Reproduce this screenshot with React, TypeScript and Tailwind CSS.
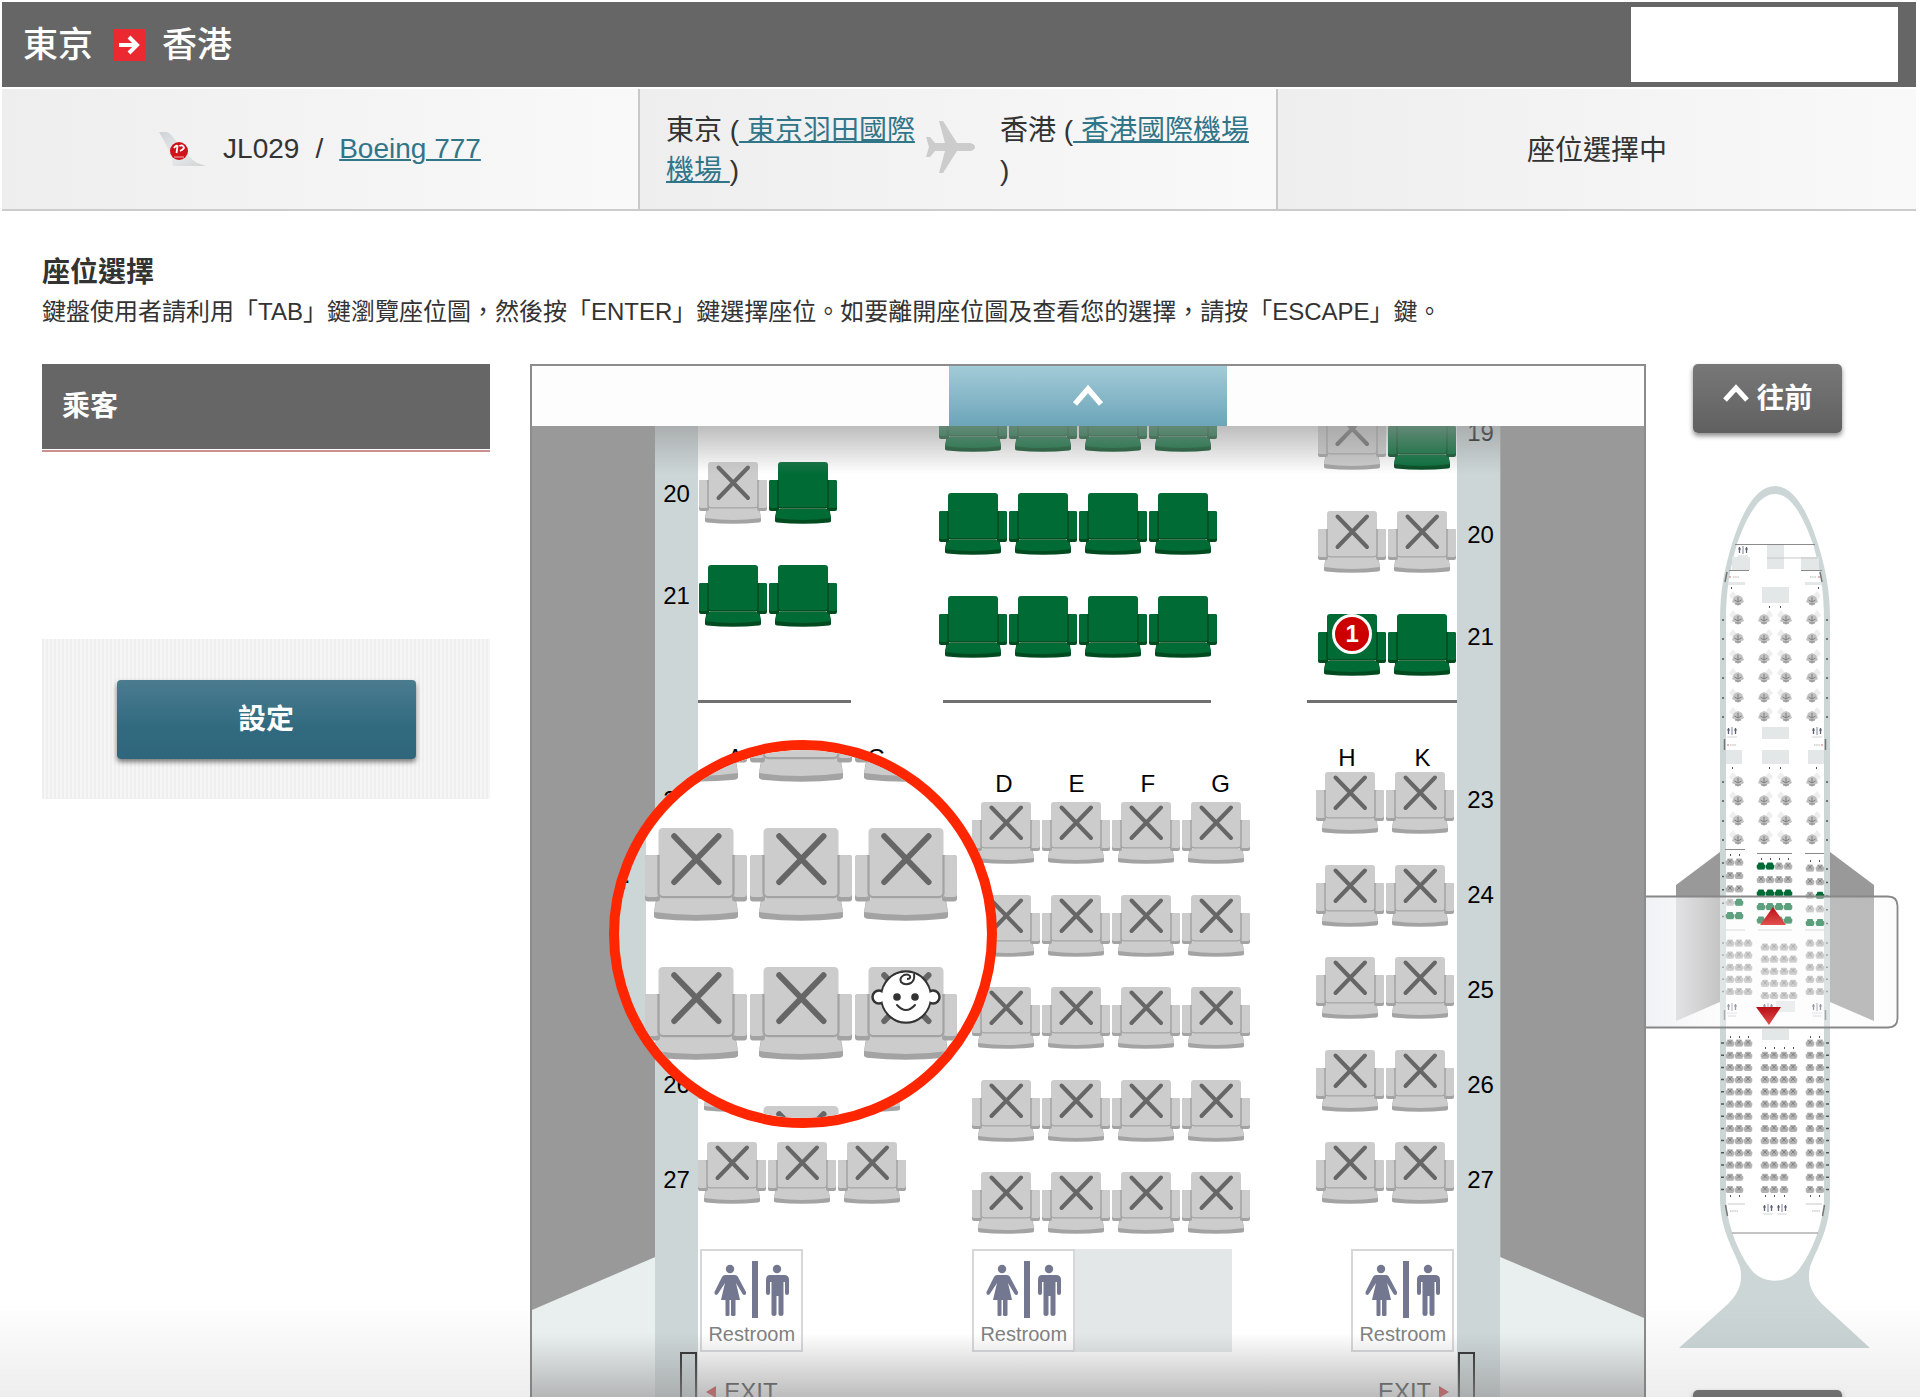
import React from 'react'

type SeatStatus = 'open' | 'taken'

interface SeatProps {
  id: string
  status: SeatStatus
  passenger?: number
}

interface SeatRowProps {
  row: number
  letters: string[]
  open?: string[]
  passenger?: { letter: string, number: number }
}

const SeatIcon: React.FC<{ status: SeatStatus, className?: string }> = ({ status, className }) => {
  const fill = status === 'open' ? '#006b35' : '#cccccc'
  const edge = status === 'open' ? '#004a1f' : '#a3a3a3'
  return (
    <svg viewBox="0 0 68 62" fill="none" className={className} aria-hidden="true">
      <path d="M7.500 47 H60.500 L62 56 V59 Q62 60 60 60.500 Q34 63 8 60.500 Q6 60 6 59 V56 Z" fill={edge} />
      <path d="M8 47 H60 L62 56 Q34 60 6 56 Z" fill={fill} />
      <rect x="0" y="18" width="10" height="31" rx="2" fill={edge} />
      <rect x="58" y="18" width="10" height="31" rx="2" fill={edge} />
      <rect x="0" y="18" width="9" height="28" rx="2" fill={fill} />
      <rect x="59" y="18" width="9" height="28" rx="2" fill={fill} />
      <path d="M9 3 Q9 0 12 0 H56 Q59 0 59 3 V46 H9 Z" fill={fill} />
      <path d="M9 18 V43 Q9 46 12 46 H56 Q59 46 59 43 V18" stroke={edge} strokeWidth="1.500" />
      {status === 'taken' && (
        <path d="M19.500 5.500 L49 36 M49 5.500 L19.500 36" stroke="#666666" strokeWidth="4" strokeLinecap="round" />
      )}
    </svg>
  )
}

const Seat: React.FC<SeatProps> = ({ id, status, passenger }) => (
  <button
    type="button"
    aria-label={`座位 ${id}`}
    disabled={status === 'taken'}
    className="relative block h-[62px] w-[68px] shrink-0"
  >
    <SeatIcon status={status} className="h-full w-full" />
    {passenger && (
      <span className="absolute left-[14px] top-0 flex h-10 w-10 items-center justify-center rounded-full border-[3px] border-white bg-[#cc0000] text-2xl font-bold leading-none text-white">
        {passenger}
      </span>
    )}
  </button>
)

const SeatRow: React.FC<SeatRowProps> = ({ row, letters, open = [], passenger }) => (
  <div className="flex gap-[2px]">
    {letters.map((letter) => (
      <Seat
        key={letter}
        id={`${row}${letter}`}
        status={open.includes(letter) ? 'open' : 'taken'}
        passenger={passenger?.letter === letter ? passenger.number : undefined}
      />
    ))}
  </div>
)

const REAR_ROWS = [23, 24, 25, 26, 27]

const RearBlock: React.FC<{ letters: string[] }> = ({ letters }) => (
  <div className="flex h-[432px] flex-col justify-between">
    {REAR_ROWS.map((row) => (
      <SeatRow key={row} row={row} letters={letters} />
    ))}
  </div>
)

const RowNumber: React.FC<{ children: React.ReactNode }> = ({ children }) => (
  <span className="block h-[30px] shrink-0 text-2xl leading-[30px]">{children}</span>
)

const Restroom: React.FC = () => (
  <div className="flex h-[103px] w-[103px] shrink-0 flex-col items-center border-2 border-[#d5d7da] bg-white">
    <svg viewBox="12 10 78 60" className="mt-2 h-[60px] w-[78px]" fill="#73778f" aria-hidden="true">
      <circle cx="29" cy="20" r="4.200" />
      <path d="M24 26 H34 Q36 26 37 28 L45 43 Q45.500 46 43 46 Q42 46 41 44 L35 34 L39 51 H34.500 V66 Q34.500 67 33 67 H31.500 Q30 67 30 66 V51 H28.500 V66 Q28.500 67 27 67 H25.500 Q24.500 67 24.500 66 V51 H20 L24 34 L17.500 44 Q16.500 46 15 46 Q13 45.500 13.500 43 L21 28 Q22 26 24 26 Z" />
      <rect x="51" y="12" width="6" height="57" />
      <circle cx="76" cy="20" r="4.200" />
      <path d="M69 26 H83 Q88 26 88 31 V44 Q88 46 86 46 Q84 46 84 44 V33 H82.500 V65 Q82.500 67 80 67 Q77.500 67 77.500 65 V47 H75.500 V65 Q75.500 67 73 67 Q70.500 67 70.500 65 V33 H69 V44 Q69 46 67 46 Q65 46 65 44 V31 Q65 26 69 26 Z" />
    </svg>
    <span className="mt-[3px] text-xl leading-6 text-[#808080]">Restroom</span>
  </div>
)

const Divider: React.FC = () => <div className="h-[3px] w-full shrink-0 bg-[#707070]" />

const BabyIcon: React.FC = () => (
  <svg viewBox="0 0 70 54" className="absolute left-4 top-[3px] h-[54px] w-[70px]" fill="white" stroke="#333333" strokeWidth="2.500" aria-hidden="true">
    <circle cx="8" cy="27" r="6.500" />
    <circle cx="62" cy="27" r="6.500" />
    <path d="M11 21 C14 9 24 1.500 35 1.500 C46 1.500 56 9 59 21 M11 33 C14 45 24 52.500 35 52.500 C46 52.500 56 45 59 33" />
    <ellipse cx="35" cy="27" rx="24" ry="24.500" stroke="none" />
    <path d="M36 9 Q40 9 39 6 Q37 3.500 33 5 Q28 8 30 12 Q34 16 40 13 Q44 10 43 4" fill="none" strokeWidth="2" />
    <circle cx="26" cy="27" r="3.800" fill="#333333" stroke="none" />
    <circle cx="44" cy="27" r="3.800" fill="#333333" stroke="none" />
    <path d="M26 35 Q35 45 44 35" fill="none" strokeWidth="2" strokeLinecap="round" />
  </svg>
)

// Enlarged view of the seats around 24A - 25C
const Magnifier: React.FC = () => (
  <div className="absolute -left-[46px] top-[314px] h-[388px] w-[388px] overflow-hidden rounded-full border-[10px] border-[#ff2600] bg-[linear-gradient(90deg,#ccd6d7_27px,#ffffff_27px)]">
    <span className="absolute -left-[30px] top-[107px] text-4xl leading-10">24</span>
    <div className="-mt-[61px] flex flex-col gap-[46px] pl-[26px]">
      {[0, 1, 2, 3].map((row) => (
        <div key={row} className="flex gap-[3px]">
          {[0, 1, 2].map((col) => (
            <div key={col} className="relative h-[93px] w-[102px] shrink-0">
              <SeatIcon status="taken" className="h-full w-full" />
              {row === 2 && col === 2 && <BabyIcon />}
            </div>
          ))}
        </div>
      ))}
    </div>
  </div>
)

const Cabin: React.FC = () => (
  <div className="min-w-0 flex-1 bg-white">
    {/* Rows 19 - 21 */}
    <div className="flex h-[277px] justify-between">
      <div className="flex w-[153px] flex-col justify-end">
        <div className="mb-[73px] flex flex-col gap-[41px] pl-px">
          <SeatRow row={20} letters={['A', 'C']} open={['C']} />
          <SeatRow row={21} letters={['A', 'C']} open={['A', 'C']} />
        </div>
        <Divider />
      </div>
      <div className="flex w-[281px] flex-col justify-end">
        <div className="mb-[42px] flex flex-col gap-[41px]">
          {[19, 20, 21].map((row) => (
            <SeatRow key={row} row={row} letters={['D', 'E', 'F', 'G']} open={['D', 'E', 'F', 'G']} />
          ))}
        </div>
        <div className="pl-1 pr-[9px]">
          <Divider />
        </div>
      </div>
      <div className="flex w-[150px] flex-col justify-end">
        <div className="mb-6 flex flex-col gap-[41px] pl-[11px]">
          <SeatRow row={19} letters={['H', 'K']} open={['K']} />
          <SeatRow row={20} letters={['H', 'K']} />
          <SeatRow row={21} letters={['H', 'K']} open={['H', 'K']} passenger={{ letter: 'H', number: 1 }} />
        </div>
        <Divider />
      </div>
    </div>

    {/* Rows 23 - 27 */}
    <div className="flex h-[546px] justify-between pr-[3px]">
      <div className="w-[208px] pt-[41px]">
        <div className="flex h-7 gap-[54px] pl-[29px] text-2xl leading-7">
          <span>A</span>
          <span>B</span>
          <span>C</span>
        </div>
        <RearBlock letters={['A', 'B', 'C']} />
      </div>
      <div className="w-[278px] pt-[67px]">
        <div className="mb-1 flex h-7 gap-14 pl-[23px] text-2xl leading-7">
          <span>D</span>
          <span>E</span>
          <span>F</span>
          <span>G</span>
        </div>
        <RearBlock letters={['D', 'E', 'F', 'G']} />
      </div>
      <div className="w-[138px] pt-[41px]">
        <div className="flex h-7 gap-[59px] pl-[22px] text-2xl leading-7">
          <span>H</span>
          <span>K</span>
        </div>
        <RearBlock letters={['H', 'K']} />
      </div>
    </div>

    {/* Restrooms */}
    <div className="flex justify-between pr-[3px]">
      <div className="w-[208px] pl-[2px]">
        <Restroom />
      </div>
      <div className="flex w-[278px] pr-[18px]">
        <Restroom />
        <div className="flex-1 bg-[#e3e7e8]" />
      </div>
      <div className="flex w-[138px] justify-end">
        <Restroom />
      </div>
    </div>

    {/* Exits */}
    <div className="flex justify-between px-2 pt-[26px] text-2xl leading-7 text-[#333333]">
      <span className="flex items-center gap-2">
        <svg viewBox="0 0 10 12" className="h-3 w-[10px]" aria-hidden="true"><path d="M0 6 L10 0 V12 Z" fill="#d7262d" /></svg>
        EXIT
      </span>
      <span className="flex items-center gap-2">
        EXIT
        <svg viewBox="0 0 10 12" className="h-3 w-[10px]" aria-hidden="true"><path d="M10 6 L0 0 V12 Z" fill="#d7262d" /></svg>
      </span>
    </div>
  </div>
)

const RearRowNumbers: React.FC = () => (
  <div className="flex flex-col gap-[65px]">
    {REAR_ROWS.map((row) => (
      <RowNumber key={row}>{row}</RowNumber>
    ))}
  </div>
)

const SeatMap: React.FC = () => (
  <div className="flex min-w-0 flex-1 flex-col border-2 border-b-0 border-[#8c8c8c]">
    <div className="flex h-[60px] shrink-0 justify-center bg-[#fdfdfd]">
      <button type="button" aria-label="向上捲動" className="flex w-1/4 items-center justify-center bg-linear-to-b from-[#a3cbd8] to-[#6ca5b9]">
        <svg viewBox="0 0 32 24" className="h-6 w-8" fill="none" aria-hidden="true">
          <path d="M3 20 L16 5 L29 20" stroke="white" strokeWidth="5.500" />
        </svg>
      </button>
    </div>

    <div className="relative flex min-h-0 flex-1 items-stretch overflow-hidden">
      <div className="flex-[6] bg-[#e9efef]">
        <div className="h-[884px] bg-[#999999] [clip-path:polygon(0_0,100%_0,100%_831px,0_100%)]" />
      </div>
      <div className="relative flex w-[845px] shrink-0 text-black">
        <div className="w-[43px] shrink-0 bg-[#ccd6d7]">
          <div className="flex h-[359px] flex-col gap-[72px] pl-2 pt-[53px]">
            <RowNumber>20</RowNumber>
            <RowNumber>21</RowNumber>
          </div>
          <div className="pl-2">
            <RearRowNumbers />
          </div>
          <div className="ml-auto mr-px mt-[157px] h-20 w-[17px] border-2 border-[#222222]" />
        </div>
        <Cabin />
        <div className="w-[43px] shrink-0 bg-[#ccd6d7]">
          <div className="-mt-2 flex h-[367px] flex-col gap-[72px] pl-[10px]">
            <RowNumber>19</RowNumber>
            <RowNumber>20</RowNumber>
            <RowNumber>21</RowNumber>
          </div>
          <div className="pl-[10px]">
            <RearRowNumbers />
          </div>
          <div className="ml-px mt-[157px] h-20 w-[17px] border-2 border-[#222222]" />
        </div>
        <Magnifier />
      </div>
      <div className="flex-[7] bg-[#e9efef]">
        <div className="h-[892px] bg-[#999999] [clip-path:polygon(0_0,100%_0,100%_100%,0_831px)]" />
      </div>

      {/* Scroll shadows */}
      <div className="pointer-events-none absolute inset-x-0 top-0 h-12 bg-linear-to-b from-[#999999]/65 to-[#999999]/0" />
      <div className="pointer-events-none absolute inset-x-0 bottom-0 h-16 bg-linear-to-t from-[#999999]/65 to-[#999999]/0" />
    </div>
  </div>
)

const MiniSeat: React.FC<{ x: number, y: number, open?: boolean }> = ({ x, y, open }) => (
  <g fill={open ? '#006b35' : '#b4b4b4'}>
    <rect x={x - 3} y={y - 3.5} width="6" height="5" rx="1" />
    <rect x={x - 4.3} y={y - 1.5} width="8.600" height="4" rx="1" />
    <rect x={x - 3.5} y={y + 2} width="7" height="1.600" />
    {!open && <path d={`M${x - 1.8} ${y - 2.5} l3.600 3.600 m0 -3.600 l-3.600 3.600`} stroke="#6e6e6e" strokeWidth="0.800" />}
  </g>
)

const MiniPod: React.FC<{ x: number, y: number, flip?: boolean }> = ({ x, y, flip }) => (
  <g>
    <path d={flip ? `M${x} ${y - 4} l5 -6 l4 5 l-5 5 Z` : `M${x} ${y - 4} l-5 -6 l-4 5 l5 5 Z`} fill="#eeeeee" />
    <path d={`M${x - 4} ${y - 4} l4 -2 l4 2 l2 5 l-4 2 l-2 2 l-2 -2 l-4 -2 Z`} fill="#c2c2c2" />
    <path d={`M${x} ${y - 4} v5 M${x - 3.5} ${y - 1} l3.500 2 l3.500 -2 M${x - 3} ${y + 3} h6`} stroke="#777777" strokeWidth="0.900" fill="none" />
  </g>
)

const MiniRestroom: React.FC<{ x: number, y: number }> = ({ x, y }) => (
  <g stroke="#5d6275" strokeWidth="1.300">
    <path d={`M${x - 3.5} ${y - 3} v6 M${x + 3.5} ${y - 3} v6`} />
    <path d={`M${x} ${y - 4} v8`} strokeWidth="0.800" />
    <path d={`M${x - 5} ${y - 1} h3 M${x + 2} ${y - 1} h3`} strokeWidth="1" />
    <path d={`M${x - 5} ${y + 6} h10`} stroke="#d0d4d8" strokeWidth="1" />
  </g>
)

const POD_ROWS = [140, 159, 179, 198, 218, 237, 302, 321, 341, 360]
const FRONT_ROWS = [0, 1, 2, 3, 4]
const MID_ROWS = [0, 1, 2, 3, 4]
const TAIL_ROWS = [0, 1, 2, 3, 4, 5, 6, 7, 8, 9, 10, 11, 12]
const LEFT_X = [84, 93, 102]
const RIGHT_X = [164, 174]

const PlaneOverview: React.FC = () => (
  <svg viewBox="0 0 254 872" className="mt-[47px] h-[872px] w-[254px] shrink-0" fill="none" role="img" aria-label="飛機全圖">
    <defs>
      <linearGradient id="window" x1="0" y1="0" x2="252" y2="0" gradientUnits="userSpaceOnUse">
        <stop offset="0" stopColor="#eef1f5" stopOpacity="0.900" />
        <stop offset="0.120" stopColor="#f3f4f6" stopOpacity="0.800" />
        <stop offset="0.330" stopColor="#fafafa" stopOpacity="0.380" />
        <stop offset="1" stopColor="#f7f7f7" stopOpacity="0.350" />
      </linearGradient>
      <linearGradient id="arrow" x1="0" y1="0" x2="0" y2="1">
        <stop offset="0" stopColor="#b80f14" />
        <stop offset="1" stopColor="#e2504f" />
      </linearGradient>
    </defs>

    <path d="M74 372 L30 405 V541 L74 522 Z M184 372 L228 405 V541 L184 522 Z" fill="#999999" />
    <path d="M129 6 C110 6 96 32 86 64 C78 90 74 112 74 140 V718 C74 750 88 770 94 787 Q96 797 94 805 Q91 815 82 824 L33 868 H224 L176 824 Q167 815 164 805 Q162 797 164 787 C170 770 184 750 184 718 V140 C184 112 180 90 172 64 C162 32 148 6 129 6 Z" fill="#ccd6d7" />
    <path d="M129 14 C113 14 101 36 91 64 C84 88 80 110 80 140 V718 C80 742 92 772 104 788 C115 805 143 805 154 788 C166 772 178 742 178 718 V140 C178 110 174 88 167 64 C157 36 145 14 129 14 Z" fill="white" />

    {/* Galleys */}
    <path d="M121 64 h17 v25 h-17 Z M86 77 h18 v13 h-18 Z M155 77 h18 v13 h-18 Z M116 107 h27 v16 h-27 Z M116 247 h27 v12 h-27 Z M116 270 h27 v14 h-27 Z M80 270 h16 v14 h-16 Z M162 270 h16 v14 h-16 Z M130 521 h19 v11 h-19 Z M116 549 h27 v11 h-27 Z M82 102 h17 v3 h-17 Z M159 102 h17 v3 h-17 Z" fill="#e3e7e8" />
    <path d="M89 64.500 H169 M83 90.500 H103 M155 90.500 H176 M79 369.500 H99 M111 373.500 H146 M159 373.500 H178 M86 753 H172" stroke="#8a8a8a" />
    <path d="M121 78 H172 M79 450 H99 M112 450 H146 M159 450 H178 M82 724 H99 M160 724 H176" stroke="#c4c8c9" />
    <path d="M81 92 l-2 10 M174 92 l2 10 M78.500 259 v11 M179.500 259 v11 M78.500 530 v10 M179.500 530 v10 M79.500 725 l2 11 M178.500 725 l-2 11" stroke="#777777" strokeWidth="1.500" />
    <path d="M83 97 h2 M172 97 h2 M81 265 h2 M175 265 h2" stroke="#d76a6a" />
    <path d="M87 97 h6 M164 97 h6 M84 265 h6 M168 265 h6 M82 536 h8 M167 536 h8 M84 731 h8 M166 731 h8" stroke="#a0a0a0" strokeWidth="0.800" strokeDasharray="1.500 0.700" />

    <MiniRestroom x={97} y={70} />
    <MiniRestroom x={86} y={251} />
    <MiniRestroom x={171} y={251} />
    <MiniRestroom x={86} y={527} />
    <MiniRestroom x={122} y={527} />
    <MiniRestroom x={171} y={527} />
    <MiniRestroom x={122} y={728} />
    <MiniRestroom x={136} y={728} />

    {/* Business class */}
    <MiniPod x={92} y={121} />
    <MiniPod x={166} y={121} flip />
    {POD_ROWS.map((y) => (
      <g key={y}>
        <MiniPod x={92} y={y} />
        <MiniPod x={118} y={y} flip />
        <MiniPod x={140} y={y} />
        <MiniPod x={166} y={y} flip />
        <path d={`M76 ${y} h2 M180 ${y} h2`} stroke="#555555" strokeWidth="1.500" />
      </g>
    ))}

    {/* Premium economy */}
    {FRONT_ROWS.map((row) => (
      <g key={row}>
        {[84, 93].map((x, i) => (
          <MiniSeat key={x} x={x} y={382 + row * 13.4} open={row === 4 || (row === 3 && i === 1)} />
        ))}
        {[115, 124, 133, 142].map((x, i) => (
          <MiniSeat key={x} x={x} y={386 + row * 13.5} open={row > 1 || (row === 0 && i < 2)} />
        ))}
        {RIGHT_X.map((x, i) => (
          <MiniSeat key={x} x={x} y={388 + row * 13.6} open={row === 4 || (row === 2 && i === 1)} />
        ))}
        <path d={`M76 ${383 + row * 13.4} h2 M180 ${389 + row * 13.6} h2`} stroke="#555555" strokeWidth="1.500" />
      </g>
    ))}

    {/* Economy */}
    {MID_ROWS.map((row) => (
      <g key={row}>
        {[...LEFT_X, ...RIGHT_X].map((x) => (
          <MiniSeat key={x} x={x} y={463 + row * 12.1} />
        ))}
        {[119, 128, 138, 147].map((x) => (
          <MiniSeat key={x} x={x} y={467 + row * 12.1} />
        ))}
        <path d={`M76 ${463 + row * 12.1} h2 M180 ${463 + row * 12.1} h2`} stroke="#777777" strokeWidth="1.500" />
      </g>
    ))}
    {TAIL_ROWS.map((row) => {
      const y = 563 + row * 12.2
      const left = row > 10 ? LEFT_X.slice(0, 2) : LEFT_X
      const middle = row > 10 ? [119, 128, 138] : [119, 128, 138, 147]
      return (
        <g key={row}>
          {[...left, ...RIGHT_X].map((x) => <MiniSeat key={x} x={x} y={y} />)}
          {row > 0 && middle.map((x) => <MiniSeat key={x} x={x} y={y} />)}
          <path d={`M75 ${y} h3 M180 ${y} h3`} stroke="#555555" strokeWidth="1.500" />
        </g>
      )
    })}
    <path d="M85 108 h1 M172 108 h1 M123 127 h1 M134 127 h1 M86 288 h1 M123 288 h1 M134 288 h1 M170 288 h1 M84 375 h1 M93 375 h1 M115 379 h1 M124 379 h1 M133 379 h1 M142 379 h1 M164 381 h1 M173 381 h1 M84 557 h1 M93 557 h1 M102 557 h1 M119 568 h1 M128 568 h1 M138 568 h1 M147 568 h1 M164 557 h1 M173 557 h1 M84 716 h1 M93 716 h1 M119 716 h1 M128 716 h1 M138 716 h1 M164 716 h1 M173 716 h1" stroke="#555555" strokeWidth="2" />

    {/* Part of the cabin shown in the map */}
    <path d="M0 416.500 H242 Q251.500 416.500 251.500 426 V538 Q251.500 547.500 242 547.500 H0" fill="url(#window)" stroke="#888888" strokeWidth="1.800" />
    <path d="M127 427 L140 445 H114 Z" fill="url(#arrow)" />
    <path d="M110 527 H135 L123 545 Z" fill="url(#arrow)" />
  </svg>
)

const ScrollButton: React.FC<{ label: string, down?: boolean }> = ({ label, down }) => (
  <button
    type="button"
    className="ml-[47px] flex h-[69px] w-[149px] shrink-0 items-center justify-center gap-[6px] rounded-[5px] bg-linear-to-b from-[#787878] to-[#606060] text-[28px] font-bold leading-9 text-white shadow-[0_3px_5px_rgba(0,0,0,0.45)]"
  >
    <svg viewBox="0 0 28 20" className={down ? 'h-5 w-7 rotate-180' : 'mb-3 h-5 w-7'} fill="none" aria-hidden="true">
      <path d="M3 17 L14 5 L25 17" stroke="white" strokeWidth="5" />
    </svg>
    {label}
  </button>
)

const AirlineLogo: React.FC = () => (
  <svg viewBox="0 0 48 36" className="h-9 w-12" aria-hidden="true">
    <defs>
      <linearGradient id="tail" x1="0" y1="0" x2="1" y2="1">
        <stop offset="0" stopColor="#cdd2d6" />
        <stop offset="0.500" stopColor="#e9ebec" />
        <stop offset="1" stopColor="#cfd2d4" />
      </linearGradient>
    </defs>
    <path d="M0 1 H7 Q10 1 13 5 L30 25 Q33 29 38 32 L47 35 H14 Q12 20 0 1 Z" fill="url(#tail)" />
    <circle cx="20" cy="20" r="9" fill="#d0121b" />
    <path d="M15 17 Q17 14 18.500 15 L17.500 22 M20.500 15 Q24 13 25 17 Q23.500 19 21 20" stroke="white" strokeWidth="1.800" fill="none" />
    <path d="M15 26 h10" stroke="#f2b5b5" strokeWidth="1" />
  </svg>
)

const App: React.FC = () => {
  return (
    <div className="relative flex h-screen flex-col overflow-hidden bg-white font-['Liberation_Sans','Noto_Sans_CJK_TC',sans-serif] text-[#333333]">
      {/* Page shade at the lower edge */}
      <div className="pointer-events-none absolute inset-x-0 bottom-0 h-24 bg-linear-to-t from-black/7 to-transparent" />

      {/* Route */}
      <header className="ml-[2px] mr-1 mt-[2px] flex h-[85px] shrink-0 items-center justify-between bg-[#666666] pl-[21px] pr-[18px]">
        <h1 className="flex items-center text-[35px] font-medium leading-10 text-white">
          東京
          <span className="ml-5 mr-[17px] flex h-8 w-8 items-center justify-center bg-[#ea2a30]">
            <svg viewBox="0 0 24 24" className="h-6 w-6" fill="none" aria-hidden="true">
              <path d="M2 12 H20 M12 4 L20 12 L12 20" stroke="white" strokeWidth="4" />
            </svg>
          </span>
          香港
        </h1>
        <div className="h-[75px] w-[267px] bg-white" />
      </header>

      {/* Flight details */}
      <div className="ml-[2px] mr-1 mt-[2px] grid h-[122px] shrink-0 grid-cols-3 border-b-2 border-[#cccccc] text-[28px] leading-10">
        <div className="flex items-center justify-center border-r-2 border-[#c9c9c9] bg-linear-to-r from-[#eeeeee] to-[#f9f9f9]">
          <AirlineLogo />
          <span className="ml-4">JL029</span>
          <span className="mx-4">/</span>
          <a href="#aircraft" className="text-[#317589] underline decoration-2">Boeing 777</a>
        </div>
        <div className="flex items-center border-r-2 border-[#c9c9c9] bg-linear-to-r from-[#eeeeee] to-[#f9f9f9] pl-[26px]">
          <p className="w-[254px] pt-1">
            東京 (<a href="#haneda" className="text-[#317589] underline decoration-2">{' 東京羽田國際機場 '}</a>)
          </p>
          <svg viewBox="0 0 50 52" className="mb-1 ml-[6px] mr-6 h-[52px] w-[50px] shrink-0" fill="#cccccc" aria-hidden="true">
            <path d="M13 0 H17 L31 22 H44 Q49 23 49 26 Q49 29 44 30 H31 L17 52 H13 L19 30 H9 L4 36 H0 L3 26 L0 16 H4 L9 22 H19 Z" />
          </svg>
          <p className="w-[254px] pt-1">
            香港 (<a href="#hongkong" className="text-[#317589] underline decoration-2">{' 香港國際機場'}</a>
            <br />)
          </p>
        </div>
        <div className="flex items-center justify-center bg-linear-to-r from-[#eeeeee] to-[#f9f9f9] pt-1">
          座位選擇中
        </div>
      </div>

      {/* Seat selection */}
      <main className="flex min-h-0 flex-1 flex-col pl-[42px] pt-11">
        <h2 className="text-[28px] font-bold leading-9">座位選擇</h2>
        <p className="text-2xl leading-[42px]">
          鍵盤使用者請利用「TAB」鍵瀏覽座位圖，然後按「ENTER」鍵選擇座位。如要離開座位圖及查看您的選擇，請按「ESCAPE」鍵。
        </p>

        <div className="mt-[31px] flex min-h-0 flex-1">
          <aside className="mr-10 w-[448px] shrink-0">
            <div className="border-b-2 border-[#cc8f8f] pb-px">
              <h3 className="bg-[#666666] px-5 pb-6 pt-[25px] text-[28px] font-bold leading-9 text-white">乘客</h3>
            </div>
            <div className="mt-[187px] flex h-[160px] items-center justify-center bg-[repeating-linear-gradient(90deg,#efefef_0_2px,#f6f6f6_2px_4px)]">
              <button
                type="button"
                className="h-[79px] w-[299px] rounded-[4px] bg-linear-to-b from-[#4b7c90] via-[#316a7f] via-60% to-[#30667b] pt-[2px] text-[28px] font-bold leading-9 text-white shadow-[0_3px_5px_rgba(0,0,0,0.5)]"
              >
                設定
              </button>
            </div>
          </aside>

          <SeatMap />

          <nav aria-label="座位圖導覽" className="flex w-[274px] shrink-0 flex-col">
            <ScrollButton label="往前" />
            <PlaneOverview />
            <div className="mt-[38px]">
              <ScrollButton label="往後" down />
            </div>
          </nav>
        </div>
      </main>
    </div>
  )
}

export default App
